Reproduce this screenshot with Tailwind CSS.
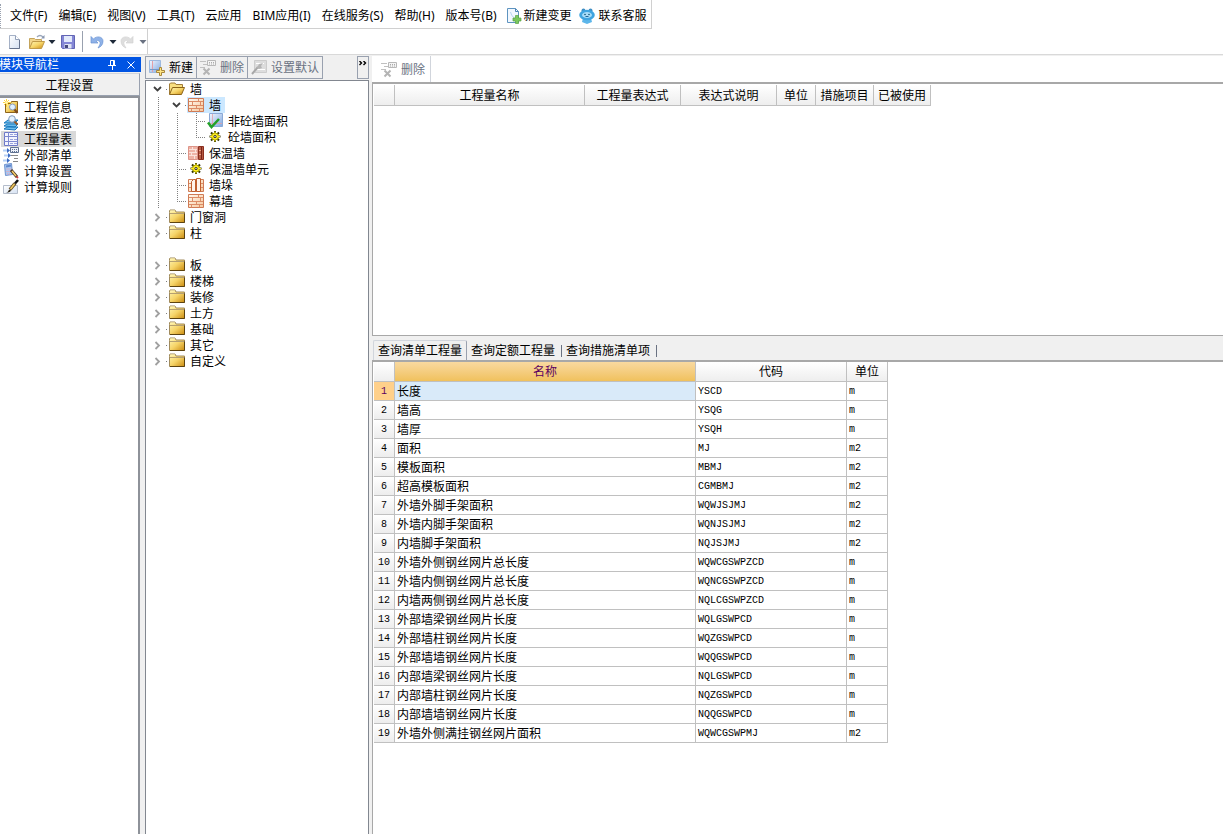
<!DOCTYPE html>
<html lang="zh-CN">
<head>
<meta charset="utf-8">
<title>工程设置</title>
<script src="https://cdn.jsdelivr.net/npm/@tailwindcss/browser@4"></script>
</head>
<body class="flex h-screen flex-col overflow-hidden bg-[#f0f0f0] font-['Noto_Sans','Noto_Sans_CJK_SC',sans-serif] text-[12px] leading-4 text-black">

<svg class="absolute size-0" aria-hidden="true">
  <defs>
    <linearGradient id="gold" x1="0" y1="0" x2="1" y2="1"><stop offset="0" stop-color="#fff6b4"/><stop offset=".5" stop-color="#f6d468"/><stop offset="1" stop-color="#c98a10"/></linearGradient>
    <linearGradient id="blue" x1="0" y1="0" x2="1" y2="1"><stop offset="0" stop-color="#f4f8ff"/><stop offset="1" stop-color="#7fa8e0"/></linearGradient>
    <linearGradient id="page" x1="0" y1="0" x2="1" y2="1"><stop offset="0" stop-color="#ffffff"/><stop offset="1" stop-color="#d5e1f2"/></linearGradient>
    <linearGradient id="brickfill" x1="0" y1="0" x2="1" y2="1"><stop offset="0" stop-color="#fffaf0"/><stop offset="1" stop-color="#f6c79c"/></linearGradient>
    <symbol id="folder" viewBox="0 0 16 16"><path d="M.5 3.500v-2l.5-.5h5l1 2h8.500v10.500H.5z" fill="url(#gold)" stroke="#a08a5c"/><path d="M1.500 2h4.500" stroke="#fff3b4"/><path d="M1 4.500h14" stroke="#b5a071"/><path d="M1 13.500h14.500V4.500" fill="none" stroke="#5c4310"/></symbol>
    <symbol id="folderopen" viewBox="0 0 16 16"><path d="M.5 13V3l1-1H6l1 1.500h6.500v3" fill="#f9df80" stroke="#a07c38"/><path d="M.5 13.500l3-7h12l-3 7z" fill="url(#gold)" stroke="#8c6418"/></symbol>
    <symbol id="brick" viewBox="0 0 16 16"><path d="M.5 1.500h15v13H.5z" fill="url(#brickfill)" stroke="#cf7b55"/><path d="M1 4.500h14M1 8.500h14M1 11.500h14M10.500 2v2.500M4.500 4.500v4M12.500 4.500v4M8.500 8.500v3M3.500 11.500v3M11.500 11.500v3" stroke="#dc8c66" fill="none"/></symbol>
    <symbol id="brickinsul" viewBox="0 0 16 16"><path d="M.5 1.500h9v13h-9z" fill="#efb3a6" stroke="#dd9488"/><path d="M1 4.500h8M1 7.500h8M1 10.500h8M4.500 2v3M7.500 5v3M3.500 8v3M6.500 11v3" stroke="#fbe3dc"/><path d="M10.500 1.500h5v13h-5z" fill="#b55a42" stroke="#8c2f20"/><path d="M13.500 2v12" stroke="#7a2418"/><path d="M11 5.500h2M11 9.500h2" stroke="#e8a28c"/></symbol>
    <symbol id="pier" viewBox="0 0 16 16"><path d="M.5 2.500h15v12H.5z" fill="url(#brickfill)" stroke="#cf7b55"/><path d="M1 6.500h3M1 10.500h3M12 6.500h3M12 10.500h3" stroke="#dc8c66"/><path d="M3.500 14.500v-10l2-2h2v12zM8.500 1.500h4v13h-4z" fill="#fff4ea" stroke="#c0602f"/></symbol>
    <symbol id="gear" viewBox="0 0 16 16"><g stroke="#333300" stroke-width="2"><path d="M8 2v11M2.500 7.500h11M4 3.500l8 8M12 3.500l-8 8"/></g><circle cx="8" cy="7.500" r="3.500" fill="#ffee20" stroke="#b0a800"/><path d="M8 2.500v2M8 10.500v2M3 7.500h2M11 7.500h2" stroke="#ffee20"/><circle cx="8" cy="7.500" r="1.500" fill="#222"/><circle cx="8" cy="7.500" r=".7" fill="#fff"/></symbol>
    <symbol id="check" viewBox="0 0 16 16"><path d="M2.500.5h13v13h-13z" fill="url(#blue)" stroke="#8ba9d6"/><path d="M5.500 1v12M3 10.500h12" stroke="#e2a0a8" stroke-width=".8"/><path d="M1 9.500l3.500 4.500L12 6" fill="none" stroke="#24a127" stroke-width="2.500"/></symbol>
    <symbol id="newrow" viewBox="0 0 16 16"><path d="M.5.500h11v12H.5z" fill="url(#blue)" stroke="#9db9de"/><path d="M3.500 1v11" stroke="#e3a0a8"/><path d="M1 9.500h10" stroke="#7398c8"/><path d="M10.500 7.500h2v3h3v2h-3v3h-2v-3h-3v-2h3z" fill="#ffe583" stroke="#a8873a"/></symbol>
    <symbol id="delrow" viewBox="0 0 16 16"><path d="M0 1.500h6M3 4.500h4M0 7.500h5" stroke="#c0c0c0"/><path d="M7.500.5h8v5h-8z" fill="#f4f4f4" stroke="#b8b8b8"/><path d="M9 2.500h6M9 4h6" stroke="#aaa" stroke-dasharray="1 1"/><path d="M3.500 8.500l6 6M9.500 8.500l-6 6" stroke="#b4b4b4" stroke-width="2"/></symbol>
    <symbol id="default" viewBox="0 0 16 16"><path d="M3.500.5h12v12h-12z" fill="#ddd" stroke="#ccc"/><path d="M5 3.500h8M5 9.500h9" stroke="#fff"/><path d="M1 14l6-7" stroke="#a8a8a8" stroke-width="2"/><path d="M6 8l2-4 4-1-2 3 1 2-3 1z" fill="#b5b5b5"/></symbol>
    <symbol id="chevopen" viewBox="0 0 19 16"><path d="M5 6l3.500 3.500L12 6" fill="none" stroke="#404040" stroke-width="1.800"/><path d="M17 8.500h1" stroke="#808080"/></symbol>
    <symbol id="chevshut" viewBox="0 0 19 16"><path d="M6.500 5l3.500 3.500L6.500 12" fill="none" stroke="#a0a0a0" stroke-width="1.800"/><path d="M17 8.500h1" stroke="#808080"/></symbol>
    <symbol id="line-v" viewBox="0 0 19 16"><path d="M9.500 0v16" stroke="#808080" stroke-dasharray="1 1"/></symbol>
    <symbol id="line-t" viewBox="0 0 19 16"><path d="M9.500 0v16M11 8.500h8" stroke="#808080" stroke-dasharray="1 1"/></symbol>
    <symbol id="line-l" viewBox="0 0 19 16"><path d="M9.500 0v9M11 8.500h8" stroke="#808080" stroke-dasharray="1 1"/></symbol>
    <symbol id="blank" viewBox="0 0 19 16"></symbol>
    <symbol id="info" viewBox="0 0 16 16"><path d="M2.500 4.500h5l1-2h6v11h-12z" fill="url(#gold)" stroke="#8d641c"/><path d="M3.500 0v8M0 3.500h8M1 1l5 5M6 1L1 6" stroke="#ffd640"/><circle cx="3.500" cy="3.500" r="1.300" fill="#fff8c0"/><circle cx="9.500" cy="8" r="3" fill="#dff0ff" stroke="#8a9cba"/><path d="M11.500 10.500l3 3.500" stroke="#7c4b20" stroke-width="2"/></symbol>
    <symbol id="floor" viewBox="0 0 16 16"><path d="M1 8l4-3h10l-3 3zM1 11l3-2h11l-3 3zM1 14l3-2h11l-3 3z" fill="#6cbcec" stroke="#1778bd"/><circle cx="9" cy="4" r="3.300" fill="#e4f2ff" stroke="#8198b8"/><path d="M11.500 6.500l3 3" stroke="#93572a" stroke-width="2"/></symbol>
    <symbol id="grid" viewBox="0 0 16 16"><path d="M1.500 1.500h13v13h-13z" fill="#f4f5ff" stroke="#6c78c8"/><path d="M5.500 1v14M1 5.500h14M1 10.500h14" stroke="#7d89d0"/><path d="M7 3.500h7M7 8.500h7M7 12.500h7" stroke="#9aa4dd" stroke-dasharray="3 1"/></symbol>
    <symbol id="external" viewBox="0 0 16 16"><path d="M7.500.5h8v5h-8z" fill="#eef2fa" stroke="#5f7191"/><path d="M9 2.500h6M9 4.500h6" stroke="#5f7191" stroke-dasharray="1 1"/><path d="M8 8.500h7M11 11.500h4M10 14.500h5" stroke="#888"/><path d="M0 3.500h4M1 8.500h4M0 13.500h4" stroke="#b4cff6" stroke-width="2"/><path d="M4 1l3 2.500L4 6zM5 6l3 2.500L5 11zM4 11l3 2.500L4 16z" fill="#3c6cc4"/></symbol>
    <symbol id="calc" viewBox="0 0 16 16"><path d="M1.500 1.500l7-1 1 11-7 1z" fill="#a9c6f0" stroke="#6f94cf"/><path d="M3 3.500l5-1" stroke="#5f88cc" stroke-width="2"/><path d="M3.500 6h5M3.500 8.500h5M4 11h4" stroke="#f3a0a8" stroke-dasharray="1 1"/><path d="M8 7l6 7" stroke="#4b3821" stroke-width="3"/><path d="M9 8l4 5" stroke="#f6cf6a" stroke-width="1.500"/><path d="M13.500 13.500l1.500 1.500" stroke="#c44" stroke-width="2"/></symbol>
    <symbol id="rule" viewBox="0 0 16 16"><path d="M.5 6.500h14v8H.5z" fill="url(#page)" stroke="#b4bdcb"/><path d="M7 10.500l5-6" stroke="#6b5324" stroke-width="3.500"/><path d="M7.500 10l4-5" stroke="#f1cb64" stroke-width="1.500"/><path d="M12 4.500L15 1" stroke="#111" stroke-width="2.500"/><path d="M3 13.500c3 0 2-3 4-3l1 1c-1 2-3 2-5 2" fill="#2a2418"/></symbol>
    <symbol id="newfile" viewBox="0 0 16 16"><path d="M3.500 1.500h6l4 4v9h-10z" fill="url(#page)" stroke="#a5b1c6"/><path d="M9.500 1.500v4h4" fill="#fff" stroke="#93a1b9"/><path d="M3.500 14.500h10V6" fill="none" stroke="#66738c"/></symbol>
    <symbol id="openfile" viewBox="0 0 18 16"><path d="M1.500 14V4.500h5l1 1h6v3" fill="#f3d68c" stroke="#c4a45c"/><path d="M1.500 14.500l3-7h12l-3 7z" fill="url(#gold)" stroke="#c09a48"/><path d="M9 3c2-2 4-2 6 0" fill="none" stroke="#9aa6ba" stroke-width="1.300"/><path d="M13 4.500h3.500V1z" fill="#8796b0"/></symbol>
    <symbol id="save" viewBox="0 0 16 16"><path d="M1.500 1.500h13v13h-12l-1-1z" fill="#8487d6" stroke="#6265b4"/><path d="M4 2h8v6H4z" fill="#e3eafb"/><path d="M4.500 10h7v4.500h-7z" fill="#dfe3f2"/><path d="M5 11h3v3H5z" fill="#45487c"/></symbol>
    <symbol id="undo" viewBox="0 0 16 16"><path d="M4.500 5c3-3.500 9.500-2.500 9.500 2 0 4-2.500 6-5 7 1.500-2.500 3-5 1.500-6.500C9.500 6.300 8 6.500 7 7l2 2H2V2.500z" fill="#8fb2e8" stroke="#6a93d2" stroke-width=".7"/></symbol>
    <symbol id="change" viewBox="0 0 16 16"><path d="M1.500.5h8l3 3v11h-11z" fill="#f2f8ff" stroke="#5e94c0"/><path d="M9.500.5v3h3" fill="none" stroke="#4e86b5"/><path d="M4.500 4c1 3 2 5 4 6" fill="none" stroke="#b7d4ef"/><path d="M9.500 7.500h3V10H15v3h-2.500v2.500h-3V13H7v-3h2.500z" fill="#7cc85e" stroke="#58a343" stroke-width=".7"/></symbol>
    <symbol id="service" viewBox="0 0 16 16"><circle cx="4.500" cy="2.500" r="2" fill="#3f8fc4"/><circle cx="11.500" cy="2.500" r="2" fill="#3f8fc4"/><path d="M4 10h8l1 4-5 2-5-2z" fill="#5db6ea"/><ellipse cx="8" cy="7" rx="7.800" ry="5.200" fill="#3fa4e0"/><ellipse cx="8" cy="7" rx="5" ry="3" fill="#a8dcf8"/><circle cx="6" cy="6.500" r=".8" fill="#157"/><circle cx="10" cy="6.500" r=".8" fill="#157"/><path d="M6.500 8.500h3" stroke="#269"/></symbol>
    <symbol id="drop" viewBox="0 0 8 16"><path d="M.5 6h7L4 10z" fill="currentColor"/></symbol>
  </defs>
</svg>

<header class="shrink-0 border-b border-[#d9d9d9] bg-white">
  <nav class="flex h-[29px] w-fit items-center gap-[11px] border-r border-b border-[#d0d0d0] pt-1 pr-1 whitespace-nowrap" aria-label="菜单">
    <span class="-mr-[3px] h-6 w-0.5 border-l border-dotted border-gray-400"></span>
    <button>文件(F)</button><button>编辑(E)</button><button>视图(V)</button><button>工具(T)</button><button>云应用</button><button>BIM应用(I)</button><button>在线服务(S)</button><button>帮助(H)</button><button>版本号(B)</button>
    <button class="-ml-0.5 flex items-center gap-0.5"><svg class="size-4"><use href="#change"/></svg>新建变更</button>
    <button class="-ml-1 flex items-center gap-1"><svg class="size-4"><use href="#service"/></svg>联系客服</button>
  </nav>
  <div class="flex h-[25px] w-[148px] items-center border-r border-[#d0d0d0] pl-1.5" role="toolbar" aria-label="文件工具">
    <button class="mr-1.5" aria-label="新建文件"><svg class="size-4"><use href="#newfile"/></svg></button>
    <button class="flex items-center gap-0.5" aria-label="打开"><svg class="h-4 w-[18px]"><use href="#openfile"/></svg><svg class="h-4 w-2 text-gray-800"><use href="#drop"/></svg></button>
    <button class="ml-1" aria-label="保存"><svg class="size-4"><use href="#save"/></svg></button>
    <span class="ml-1.5 h-[21px] w-px bg-gray-400"></span>
    <button class="ml-1.5 flex items-center gap-1" aria-label="撤销"><svg class="size-4"><use href="#undo"/></svg><svg class="h-4 w-2 text-gray-800"><use href="#drop"/></svg></button>
    <button class="ml-0.5 flex items-center gap-1" aria-label="重做" disabled><svg class="size-4 -scale-x-100 opacity-40 grayscale"><use href="#undo"/></svg><svg class="h-4 w-2 text-gray-500"><use href="#drop"/></svg></button>
  </div>
</header>

<div class="flex min-h-0 flex-1 pt-px font-['Liberation_Sans','Noto_Sans_CJK_SC',sans-serif]">
  <aside class="flex w-[141px] shrink-0 flex-col pt-px">
    <div class="flex h-[15px] items-center overflow-hidden bg-[#0054e3] pr-1 whitespace-nowrap text-white">
      <h2 class="-ml-px flex-1">模块导航栏</h2>
      <button class="mr-2" aria-label="固定"><svg class="h-3 w-2.5"><path d="M3.500 6V1.500h4V6M1 6.500h8M5.500 7v4M6.500 2v4" fill="none" stroke="#fff"/></svg></button>
      <button aria-label="关闭"><svg class="size-3"><path d="M2.500 2.500l7 7M9.500 2.500l-7 7" stroke="#fff"/></svg></button>
    </div>
    <button class="mt-px mr-px h-[23px] border-t border-r border-b border-t-gray-300 border-r-gray-400 border-b-gray-400 pt-0.5">工程设置</button>
    <ul id="nav" class="mr-px flex-1 border-t-2 border-r-2 border-[#8e9299] bg-white pt-px"></ul>
  </aside>

  <section class="ml-1 flex w-[224px] shrink-0 flex-col">
    <div class="flex h-6 pb-px whitespace-nowrap" role="toolbar" aria-label="构件工具">
      <button class="flex items-center gap-1 border border-gray-400 px-[3px]"><svg class="size-4"><use href="#newrow"/></svg>新建</button>
      <button class="flex items-center gap-1 border border-l-0 border-gray-400 px-[3px] text-gray-500" disabled><svg class="size-4"><use href="#delrow"/></svg>删除</button>
      <button class="flex items-center gap-1 border border-l-0 border-gray-400 px-[3px] text-gray-500" disabled><svg class="size-4"><use href="#default"/></svg>设置默认</button>
      <button class="ml-auto flex w-3 justify-center border border-gray-400" aria-label="更多"><svg class="mt-1 h-2 w-2"><path d="M.5 0l2 2-2 2M4.500 0l2 2-2 2" fill="none" stroke="#000" stroke-width="1.400"/></svg></button>
    </div>
    <ul id="tree" class="flex-1 border border-b-0 border-[#828790] bg-white pl-[3px]" role="tree"></ul>
  </section>

  <main class="ml-[3px] flex min-w-0 flex-1 flex-col">
    <div class="h-[26px] bg-white"><button class="flex h-full items-center gap-1 border-r border-gray-300 pt-0.5 pr-[5px] pl-[9px] text-gray-500" disabled><svg class="size-4"><use href="#delrow"/></svg>删除</button></div>
    <div class="h-[254px] shrink-0 border-t-2 border-b border-l border-[#a8a8a8] bg-white pt-px pl-px">
      <table class="w-[557px] table-fixed border-separate border-spacing-0">
        <colgroup><col class="w-[21px]"><col class="w-[190px]"><col class="w-24"><col class="w-24"><col class="w-[39px]"><col class="w-[58px]"><col class="w-[57px]"></colgroup>
        <thead><tr id="head" class="h-[21px] bg-linear-to-b from-white to-[#ededed] whitespace-nowrap"></tr></thead>
      </table>
    </div>
    <div class="mt-1 flex h-5 shrink-0 items-end whitespace-nowrap" role="tablist">
      <button role="tab" aria-selected="true" class="ml-px h-full rounded-t-xs border border-b-0 border-gray-300 border-r-gray-400 px-1">查询清单工程量</button>
      <button role="tab" aria-selected="false" class="flex h-[18px] items-center gap-1.5 pl-1">查询定额工程量<span class="h-3 w-px bg-gray-500"></span></button>
      <button role="tab" aria-selected="false" class="flex h-[18px] items-center gap-1.5 pl-1">查询措施清单项<span class="h-3 w-px bg-gray-500"></span></button>
    </div>
    <div class="min-h-0 flex-1 border-t-2 border-l border-[#a8a8a8] bg-white pl-px">
      <table class="w-[514px] table-fixed border-separate border-spacing-0 whitespace-nowrap">
        <colgroup><col class="w-[21px]"><col class="w-[301px]"><col class="w-[151px]"><col class="w-[41px]"></colgroup>
        <thead><tr class="h-5 bg-linear-to-b from-white to-[#ededed]">
          <th class="border-r border-b border-[#c0c0c0] p-0"></th>
          <th class="border-r border-b border-[#c0c0c0] bg-linear-to-b from-[#f9d99f] to-[#f0c15c] p-0 font-normal text-[#5c0060]">名称</th>
          <th class="border-r border-b border-[#c0c0c0] p-0 font-normal">代码</th>
          <th class="border-r border-b border-[#c0c0c0] p-0 font-normal">单位</th>
        </tr></thead>
        <tbody id="rows"></tbody>
      </table>
    </div>
  </main>
</div>

<script>
const nav = [['info','工程信息'],['floor','楼层信息'],['grid','工程量表'],['external','外部清单'],['calc','计算设置'],['rule','计算规则']];
document.getElementById('nav').innerHTML = nav.map(([icon, text], i) =>
  `<li class="h-4"><button class="ml-px flex h-4 items-start gap-[5px] pr-1 pl-0.5 ${i === 2 ? 'bg-[#d9d9d9]' : ''}"><svg class="size-4"><use href="#${icon}"/></svg><span class="leading-[18px]">${text}</span></button></li>`).join('');

// Each entry: guide cells, icon, label
const tree = [
  ['chevopen','folderopen','墙'],['line-v chevopen','brick','墙'],
  ['line-v line-v line-t','check','非砼墙面积'],['line-v line-v line-l','gear','砼墙面积'],
  ['line-v line-t','brickinsul','保温墙'],['line-v line-t','gear','保温墙单元'],
  ['line-v line-t','pier','墙垛'],['line-v line-l','brick','幕墙'],
  ['chevshut','folder','门窗洞'],['chevshut','folder','柱'],null,
  ['chevshut','folder','板'],['chevshut','folder','楼梯'],['chevshut','folder','装修'],['chevshut','folder','土方'],
  ['chevshut','folder','基础'],['chevshut','folder','其它'],['chevshut','folder','自定义']];
document.getElementById('tree').innerHTML = tree.map((row, i) => {
  if (!row) return '<li class="h-4" role="none"></li>';
  const guides = row[0].split(' ').map(g => `<svg class="h-4 w-[19px] shrink-0"><use href="#${g}"/></svg>`).join('');
  return `<li class="flex h-4" role="treeitem">${guides}<span class="flex items-start gap-[5px] pr-1 pl-px ${i === 1 ? 'bg-[#cce8ff]' : ''}"><svg class="size-4"><use href="#${row[1]}"/></svg><span class="leading-[18px]">${row[2]}</span></span></li>`;
}).join('');

document.getElementById('head').innerHTML = ['','工程量名称','工程量表达式','表达式说明','单位','措施项目','已被使用'].map(t =>
  `<th class="border-r border-b border-[#c0c0c0] px-0 pt-0.5 pb-0 font-normal">${t}</th>`).join('');

const rows = [['长度','YSCD','m'],['墙高','YSQG','m'],['墙厚','YSQH','m'],['面积','MJ','m2'],['模板面积','MBMJ','m2'],['超高模板面积','CGMBMJ','m2'],
  ['外墙外脚手架面积','WQWJSJMJ','m2'],['外墙内脚手架面积','WQNJSJMJ','m2'],['内墙脚手架面积','NQJSJMJ','m2'],
  ['外墙外侧钢丝网片总长度','WQWCGSWPZCD','m'],['外墙内侧钢丝网片总长度','WQNCGSWPZCD','m'],['内墙两侧钢丝网片总长度','NQLCGSWPZCD','m'],
  ['外部墙梁钢丝网片长度','WQLGSWPCD','m'],['外部墙柱钢丝网片长度','WQZGSWPCD','m'],['外部墙墙钢丝网片长度','WQQGSWPCD','m'],
  ['内部墙梁钢丝网片长度','NQLGSWPCD','m'],['内部墙柱钢丝网片长度','NQZGSWPCD','m'],['内部墙墙钢丝网片长度','NQQGSWPCD','m'],
  ['外墙外侧满挂钢丝网片面积','WQWCGSWPMJ','m2']];
document.getElementById('rows').innerHTML = rows.map(([name, code, unit], i) =>
  `<tr class="h-[19px]">
    <th scope="row" class="border-r border-b border-[#c0c0c0] px-0 pt-0.5 pb-0 font-['Liberation_Mono',monospace] text-[10px] leading-4 font-normal ${i === 0 ? 'bg-[#ffd08a] text-[#5c0060]' : 'bg-linear-to-b from-white to-[#ededed]'}">${i + 1}</th>
    <td class="border-r border-b border-[#c0c0c0] pt-0.5 pr-0 pb-0 pl-0.5 ${i === 0 ? 'bg-[#d9eaf9]' : ''}">${name}</td>
    <td class="border-r border-b border-[#c0c0c0] pt-0.5 pr-0 pb-0 pl-0.5 font-['Liberation_Mono',monospace] text-[10px] leading-4">${code}</td>
    <td class="border-r border-b border-[#c0c0c0] pt-0.5 pr-0 pb-0 pl-0.5 font-['Liberation_Mono',monospace] text-[10px] leading-4">${unit}</td>
  </tr>`).join('');
</script>
</body>
</html>
